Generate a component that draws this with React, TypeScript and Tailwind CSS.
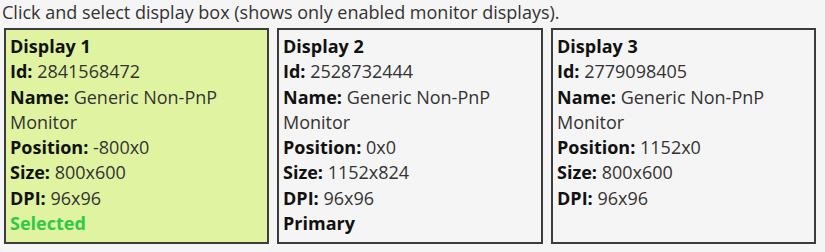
import React from "react";

interface DisplayInfo {
  title: string;
  id: string;
  position: string;
  size: string;
  dpi: string;
  selected?: boolean;
  primary?: boolean;
}

const displays: DisplayInfo[] = [
  { title: "Display 1", id: "2841568472", position: "-800x0", size: "800x600", dpi: "96x96", selected: true },
  { title: "Display 2", id: "2528732444", position: "0x0", size: "1152x824", dpi: "96x96", primary: true },
  { title: "Display 3", id: "2779098405", position: "1152x0", size: "800x600", dpi: "96x96" },
];

function Field({ label, value }: { label: string; value: string }) {
  return (
    <div>
      <span className="font-bold text-[#111]">{label}:</span> <span className="text-[#333]">{value}</span>
    </div>
  );
}

function DisplayBox({ d }: { d: DisplayInfo }) {
  return (
    <div
      className={
        d.selected
          ? "h-[216px] border-2 border-[#3c3c3c] bg-[#e0f3a0] px-[4px] pt-[4px]"
          : "h-[216px] border-2 border-[#3c3c3c] bg-[#f5f5f5] px-[4px] pt-[4px]"
      }
    >
      <div className="font-bold text-[#111]">{d.title}</div>
      <Field label="Id" value={d.id} />
      <Field label="Name" value="Generic Non-PnP Monitor" />
      <Field label="Position" value={d.position} />
      <Field label="Size" value={d.size} />
      <Field label="DPI" value={d.dpi} />
      {d.selected && <div className="font-bold text-[#2fc94a]">Selected</div>}
      {d.primary && <div className="font-bold text-[#111]">Primary</div>}
    </div>
  );
}

export default function App() {
  return (
    <div className="h-[252px] w-[825px] bg-[#f5f5f5] text-[18px] leading-[25.3px] text-[#333] [font-family:'Open_Sans',sans-serif]">
      <p className="pl-[2px] pt-0 leading-[24px]">
        Click and select display box (shows only enabled monitor displays).
      </p>
      <div className="ml-[4px] mt-[4px] grid w-[812px] grid-cols-[265px_266px_265px] gap-[8px]">
        {displays.map((d) => (
          <DisplayBox key={d.title} d={d} />
        ))}
      </div>
    </div>
  );
}
